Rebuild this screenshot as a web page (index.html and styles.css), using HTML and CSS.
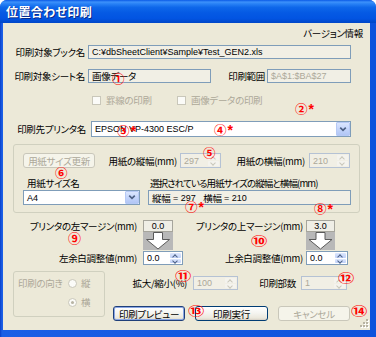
FILE: index.html
```html
<!DOCTYPE html>
<html lang="ja">
<head>
<meta charset="utf-8">
<title>位置合わせ印刷</title>
<link rel="stylesheet" href="styles.css">
</head>
<body>
<div class="window">
  <div class="titlebar"><span class="title">位置合わせ印刷</span></div>
  <div class="client">
    <div class="version-row"><span>バージョン情報</span></div>

    <div class="row row-book">
      <span class="lbl lbl-book">印刷対象ブック名</span>
      <div class="tb tb-ro tb-book">C:¥dbSheetClient¥Sample¥Test_GEN2.xls</div>
    </div>

    <div class="row row-sheet">
      <span class="lbl lbl-book">印刷対象シート名</span>
      <div class="tb tb-ro tb-sheet jp">画像データ</div>
      <span class="lbl lbl-range">印刷範囲</span>
      <div class="tb tb-ro tb-range dis">$A$1:$BA$27</div>
    </div>

    <div class="row row-checks">
      <div class="chk-item chk-item1"><span class="chk"></span><span class="chk-text dis">罫線の印刷</span></div>
      <div class="chk-item"><span class="chk"></span><span class="chk-text dis">画像データの印刷</span></div>
    </div>

    <div class="row row-printer">
      <span class="lbl lbl-printer">印刷先プリンタ名</span>
      <div class="combo combo-printer">
        <span class="combo-text">EPSON VP-4300 ESC/P</span>
        <span class="combo-btn"><svg width="13" height="13" viewBox="0 0 13 13"><polyline points="3.5,4.5 6.5,7.5 9.5,4.5" fill="none" stroke="#4d6185" stroke-width="1.8"/></svg></span>
      </div>
    </div>

    <div class="group paper">
      <div class="row paper-a">
        <div class="btn btn-dis btn-update">用紙サイズ更新</div>
        <span class="lbl lbl-h">用紙の縦幅(mm)</span>
        <div class="spin spin-dis spin-h">
          <span class="spin-val">297</span>
          <span class="spin-btns"><span class="sb sb-up"></span><span class="sb sb-dn"></span></span>
        </div>
        <span class="lbl lbl-w">用紙の横幅(mm)</span>
        <div class="spin spin-dis spin-h">
          <span class="spin-val">210</span>
          <span class="spin-btns"><span class="sb sb-up"></span><span class="sb sb-dn"></span></span>
        </div>
      </div>
      <div class="row paper-b">
        <span class="lbl-size">用紙サイズ名</span>
        <span class="lbl-sel">選択されている用紙サイズの縦幅と横幅(mm)</span>
      </div>
      <div class="row paper-c">
        <div class="combo combo-size">
          <span class="combo-text">A4</span>
          <span class="combo-btn"><svg width="13" height="13" viewBox="0 0 13 13"><polyline points="3.5,4.5 6.5,7.5 9.5,4.5" fill="none" stroke="#4d6185" stroke-width="1.8"/></svg></span>
        </div>
        <div class="tb tb-ro tb-dim"><span class="jp">縦幅</span>&nbsp;= 297 &nbsp;&nbsp;<span class="jp">横幅</span>&nbsp;= 210</div>
      </div>
    </div>

    <div class="margins">
      <div class="mblock mblock-left">
        <span class="lbl mlbl">プリンタの左マージン(mm)</span>
        <div class="mbox">0.0</div>
        <span></span>
        <div class="marrow"><svg width="30" height="18" viewBox="0 0 30 18"><rect width="30" height="18" fill="#b8b8b8"/><polygon points="10.5,0.5 19.5,0.5 19.5,7.5 26.5,7.5 15,17 3.5,7.5 10.5,7.5" fill="#fff" stroke="#5a5a5a" stroke-width="1"/></svg></div>
        <span class="lbl mlbl">左余白調整値(mm)</span>
        <div class="spin spin-m">
          <span class="spin-val">0.0</span>
          <span class="spin-btns"><span class="sb sb-up"></span><span class="sb sb-dn"></span></span>
        </div>
      </div>
      <div class="mblock mblock-right">
        <span class="lbl mlbl">プリンタの上マージン(mm)</span>
        <div class="mbox">3.0</div>
        <span></span>
        <div class="marrow"><svg width="29" height="18" viewBox="0 0 29 18"><rect width="29" height="18" fill="#b8b8b8"/><polygon points="10,0.5 19,0.5 19,7.5 26,7.5 14.5,17 3,7.5 10,7.5" fill="#fff" stroke="#5a5a5a" stroke-width="1"/></svg></div>
        <span class="lbl mlbl">上余白調整値(mm)</span>
        <div class="spin spin-m">
          <span class="spin-val">0.0</span>
          <span class="spin-btns"><span class="sb sb-up"></span><span class="sb sb-dn"></span></span>
        </div>
      </div>
    </div>

    <div class="bottom">
      <div class="group orient">
        <div class="orow orow1"><span class="olbl dis">印刷の向き</span><span class="radio"></span><span class="dis">縦</span></div>
        <div class="orow orow2"><span class="olbl"></span><span class="radio radio-on"></span><span class="dis">横</span></div>
      </div>
      <div class="bright">
        <div class="row brow1">
          <span class="lbl lbl-scale">拡大/縮小(%)</span>
          <div class="spin spin-dis spin-scale">
            <span class="spin-val">100</span>
            <span class="spin-btns"><span class="sb sb-up"></span><span class="sb sb-dn"></span></span>
          </div>
          <span class="lbl lbl-copies">印刷部数</span>
          <div class="spin spin-dis spin-copies">
            <span class="spin-val">1</span>
            <span class="spin-btns"><span class="sb sb-up"></span><span class="sb sb-dn"></span></span>
          </div>
        </div>
        <div class="row brow2">
          <div class="btn btn-default btn-preview">印刷プレビュー</div>
          <div class="btn btn-exec">印刷実行</div>
          <div class="btn btn-dis btn-cancel">キャンセル</div>
        </div>
      </div>
    </div>

    <svg class="grip" width="10" height="10" viewBox="0 0 10 10">
      <g fill="#fff"><rect x="8" y="1" width="2" height="2"/><rect x="5" y="4" width="2" height="2"/><rect x="8" y="4" width="2" height="2"/><rect x="2" y="7" width="2" height="2"/><rect x="5" y="7" width="2" height="2"/><rect x="8" y="7" width="2" height="2"/></g>
      <g fill="#b8b4a4"><rect x="7" y="0" width="2" height="2"/><rect x="4" y="3" width="2" height="2"/><rect x="7" y="3" width="2" height="2"/><rect x="1" y="6" width="2" height="2"/><rect x="4" y="6" width="2" height="2"/><rect x="7" y="6" width="2" height="2"/></g>
    </svg>

    <span class="ann a1">①</span>
    <span class="ann a2">②<b>*</b></span>
    <span class="ann a3">③<b>*</b></span>
    <span class="ann a4">④<b>*</b></span>
    <span class="ann a5">⑤</span>
    <span class="ann a6">⑥</span>
    <span class="ann a7">⑦<b>*</b></span>
    <span class="ann a8">⑧<b>*</b></span>
    <span class="ann a9">⑨</span>
    <span class="ann a10 wide">⑩</span>
    <span class="ann a11 wide">⑪</span>
    <span class="ann a12 wide">⑫</span>
    <span class="ann a13 wide">⑬</span>
    <span class="ann a14 wide">⑭</span>
  </div>
</div>
</body>
</html>
```

FILE: styles.css
```css
* { box-sizing: border-box; }
html, body { margin: 0; padding: 0; }
body {
  width: 376px;
  height: 337px;
  overflow: hidden;
  background: #ffffff;
  font-family: "Noto Sans CJK JP", sans-serif;
  font-size: 9.5px;
  line-height: 12px;
  letter-spacing: -0.3px;
  color: #000;
  font-feature-settings: "palt";
}
.window {
  width: 376px;
  height: 337px;
  display: flex;
  flex-direction: column;
  background: linear-gradient(to right, #0a3fc8 0px, #1b5fe6 2px, #0d52dc 100%);
  border-radius: 7px 7px 0 0;
  overflow: hidden;
}
.titlebar {
  height: 23px;
  flex: none;
  display: flex;
  align-items: center;
  padding-left: 6px;
  background: linear-gradient(to bottom, #0a5ae6 0%, #3d91fb 9%, #2a83f6 16%, #0e67ea 32%, #055ae4 55%, #0254e2 80%, #0047c8 100%);
}
.title {
  color: #fff;
  font-weight: bold;
  font-size: 12px;
  letter-spacing: 0.4px;
  text-shadow: 1px 1px 0 #0a2a8a;
}
.client {
  position: relative;
  flex: 1;
  margin: 0 6px 7px 3px;
  background: #ece9d8;
}
.dis { color: #aca899; }
.row { display: flex; align-items: center; }
.lbl { white-space: nowrap; }

.version-row { margin-top: 4px; height: 12px; text-align: right; padding-right: 7px; }

.tb {
  height: 14px;
  border: 1px solid #7f9db9;
  background: #fff;
  padding: 0 3px;
  display: flex;
  align-items: center;
  white-space: nowrap;
  overflow: hidden;
  font-family: "Liberation Sans", "Noto Sans CJK JP", sans-serif;
  font-size: 9px;
  letter-spacing: normal;
}
.tb .jp, .tb.jp { font-family: "Noto Sans CJK JP", sans-serif; font-size: 9.5px; letter-spacing: -0.3px; }
.tb-ro { background: #f1efe5; }

.row-book { margin-top: 6px; height: 14px; }
.lbl-book { width: 82px; text-align: right; margin-right: 3px; }
.tb-book { width: 263px; }

.row-sheet { margin-top: 10px; height: 14px; }
.tb-sheet { width: 123px; }
.lbl-range { width: 54px; text-align: right; margin-right: 2px; }
.tb-range { width: 84px; color: #aca899; }

.row-checks { margin-top: 12px; height: 10px; }
.chk-item { display: flex; align-items: center; }
.chk-item1 { margin-left: 89px; width: 85px; }
.chk { width: 9px; height: 9px; border: 1px solid #c9c7ba; background: #fbfbf8; flex: none; }
.chk-text { margin-left: 5px; white-space: nowrap; }

.row-printer { margin-top: 16px; height: 16px; }
.lbl-printer { width: 83px; text-align: right; margin-right: 5px; }
.combo {
  height: 16px;
  border: 1px solid #7f9db9;
  background: #fff;
  display: flex;
  align-items: stretch;
}
.combo-printer { width: 260px; }
.combo-text {
  flex: 1;
  padding-left: 3px;
  display: flex;
  align-items: center;
  font-family: "Liberation Sans", sans-serif;
  font-size: 9px;
  letter-spacing: normal;
  white-space: nowrap;
}
.combo-btn {
  width: 14px;
  display: flex;
  align-items: center;
  justify-content: center;
  background: linear-gradient(to bottom, #dbe6fe 0%, #c4d5fb 50%, #b2c6f5 100%);
  border: 1px solid #b6c9f5;
  border-radius: 1px;
}

.group {
  border: 1px solid #d0d0bf;
  border-radius: 3px;
}
.paper {
  margin-top: 7px;
  margin-left: 10px;
  width: 347px;
  height: 69px;
}
.paper-a { margin-top: 8px; height: 15px; }
.btn {
  height: 15px;
  border: 1px solid #003c74;
  border-radius: 3px;
  background: linear-gradient(to bottom, #ffffff 0%, #f5f5f1 45%, #ebe8dc 85%, #d6d0c5 100%);
  display: flex;
  align-items: center;
  justify-content: center;
  white-space: nowrap;
}
.btn-dis { border-color: #c9c7ba; background: #f5f4ea; color: #aca899; }
.btn-default { box-shadow: inset 0 0 0 1px #8aa6e4; border-color: #1f3f7a; }
.btn-update { margin-left: 9px; width: 72px; }
.lbl-h { width: 82px; text-align: right; margin-right: 3px; }
.lbl-w { width: 84px; text-align: right; margin-right: 4px; }

.spin {
  height: 15px;
  border: 1px solid #7f9db9;
  background: #fff;
  display: flex;
  align-items: stretch;
  padding: 1px;
}
.spin-val {
  flex: 1;
  display: flex;
  align-items: center;
  padding-left: 2px;
  font-family: "Liberation Sans", sans-serif;
  font-size: 9px;
  letter-spacing: normal;
}
.spin-btns { width: 11px; display: flex; flex-direction: column; gap: 1px; }
.sb {
  flex: 1;
  position: relative;
  background: linear-gradient(to bottom, #dde7fd, #bfd0f8);
  border-radius: 1px;
}
.sb::after {
  content: "";
  position: absolute;
  left: 3px;
  width: 3px;
  height: 3px;
  border: solid #4d6185;
  border-width: 1.5px 1.5px 0 0;
}
.sb-up::after { top: 2px; transform: rotate(-45deg); }
.sb-dn::after { top: 0px; transform: rotate(135deg); }
.spin-dis { border-color: #b5c2d4; background: #f1efe5; }
.spin-dis .spin-val { color: #aca899; }
.spin-dis .sb { background: #f4f3ee; }
.spin-dis .sb::after { border-color: #c9c7ba; }
.spin-h { width: 41px; }

.paper-b { margin-top: 9px; height: 12px; white-space: nowrap; }
.lbl-size { margin-left: 13px; width: 123px; }
.lbl-sel { letter-spacing: -0.9px; }
.paper-c { margin-top: 1px; height: 15px; }
.combo-size { margin-left: 9px; width: 117px; height: 15px; }
.tb-dim { margin-left: 8px; width: 203px; height: 15px; }

.margins { display: flex; margin-top: 7px; }
.mblock {
  display: grid;
  grid-template-rows: 12px 18px 15px;
  align-items: center;
}
.mblock-left { grid-template-columns: 134px 40px; column-gap: 6px; }
.mblock-right { grid-template-columns: 120px 42px; column-gap: 3px; }
.mlbl { text-align: right; }
.mbox {
  height: 12px;
  width: 30px;
  border: 1px solid #a6a59c;
  background: #efeee6;
  display: flex;
  align-items: center;
  justify-content: center;
  font-family: "Liberation Sans", sans-serif;
  font-size: 9px;
  letter-spacing: normal;
}
.mblock-right .mbox { width: 29px; }
.marrow { height: 18px; display: flex; }
.spin-m { height: 14px; align-self: end; }

.bottom { display: flex; margin-top: 6px; }
.orient { margin-left: 10px; width: 92px; height: 46px; }
.orow { display: flex; align-items: center; height: 12px; }
.orow1 { margin-top: 5px; }
.orow2 { margin-top: 7px; }
.olbl { width: 54px; padding-left: 4px; white-space: nowrap; }
.radio {
  width: 9px;
  height: 9px;
  border-radius: 50%;
  border: 1px solid #c9c7ba;
  background: #fbfbf8;
  margin-right: 4px;
  position: relative;
}
.radio-on::after {
  content: "";
  position: absolute;
  left: 2px;
  top: 2px;
  width: 3px;
  height: 3px;
  border-radius: 50%;
  background: #b8b4a4;
}
.bright { margin-left: 8px; display: flex; flex-direction: column; }
.brow1 { margin-top: 5px; height: 14px; }
.lbl-scale { width: 74px; text-align: right; margin-right: 6px; }
.spin-scale { width: 45px; height: 14px; }
.lbl-copies { width: 58px; text-align: right; margin-right: 5px; }
.spin-copies { width: 46px; height: 14px; }
.brow2 { margin-top: 16px; height: 15px; gap: 10px; }
.btn-preview { width: 72px; }
.btn-exec { width: 73px; }
.btn-cancel { width: 72px; }

.grip { position: absolute; right: 1px; bottom: 1px; }

.ann {
  position: absolute;
  color: #f00;
  font-family: "Noto Sans CJK JP", sans-serif;
  font-size: 12.5px;
  font-weight: bold;
  line-height: 12px;
  letter-spacing: normal;
  white-space: nowrap;
  font-feature-settings: normal;
}
.ann b {
  font-family: "Liberation Sans", sans-serif;
  font-size: 14px;
  font-weight: bold;
  margin-left: 1px;
  vertical-align: top;
}
.ann.wide { transform: scaleX(1.3); transform-origin: left center; }
.a1 { left: 109px; top: 50px; }
.a2 { left: 292px; top: 80px; }
.a3 { left: 114px; top: 102px; }
.a4 { left: 211px; top: 101px; }
.a5 { left: 200px; top: 124px; }
.a6 { left: 52px; top: 144px; }
.a7 { left: 182px; top: 178px; }
.a8 { left: 311px; top: 180px; }
.a9 { left: 65px; top: 209px; font-size: 13px; }
.a10 { left: 248px; top: 212px; transform: scaleX(1.6); }
.a11 { left: 172px; top: 247px; }
.a12 { left: 335px; top: 249px; }
.a13 { left: 185px; top: 282px; }
.a14 { left: 348px; top: 282px; }
```
